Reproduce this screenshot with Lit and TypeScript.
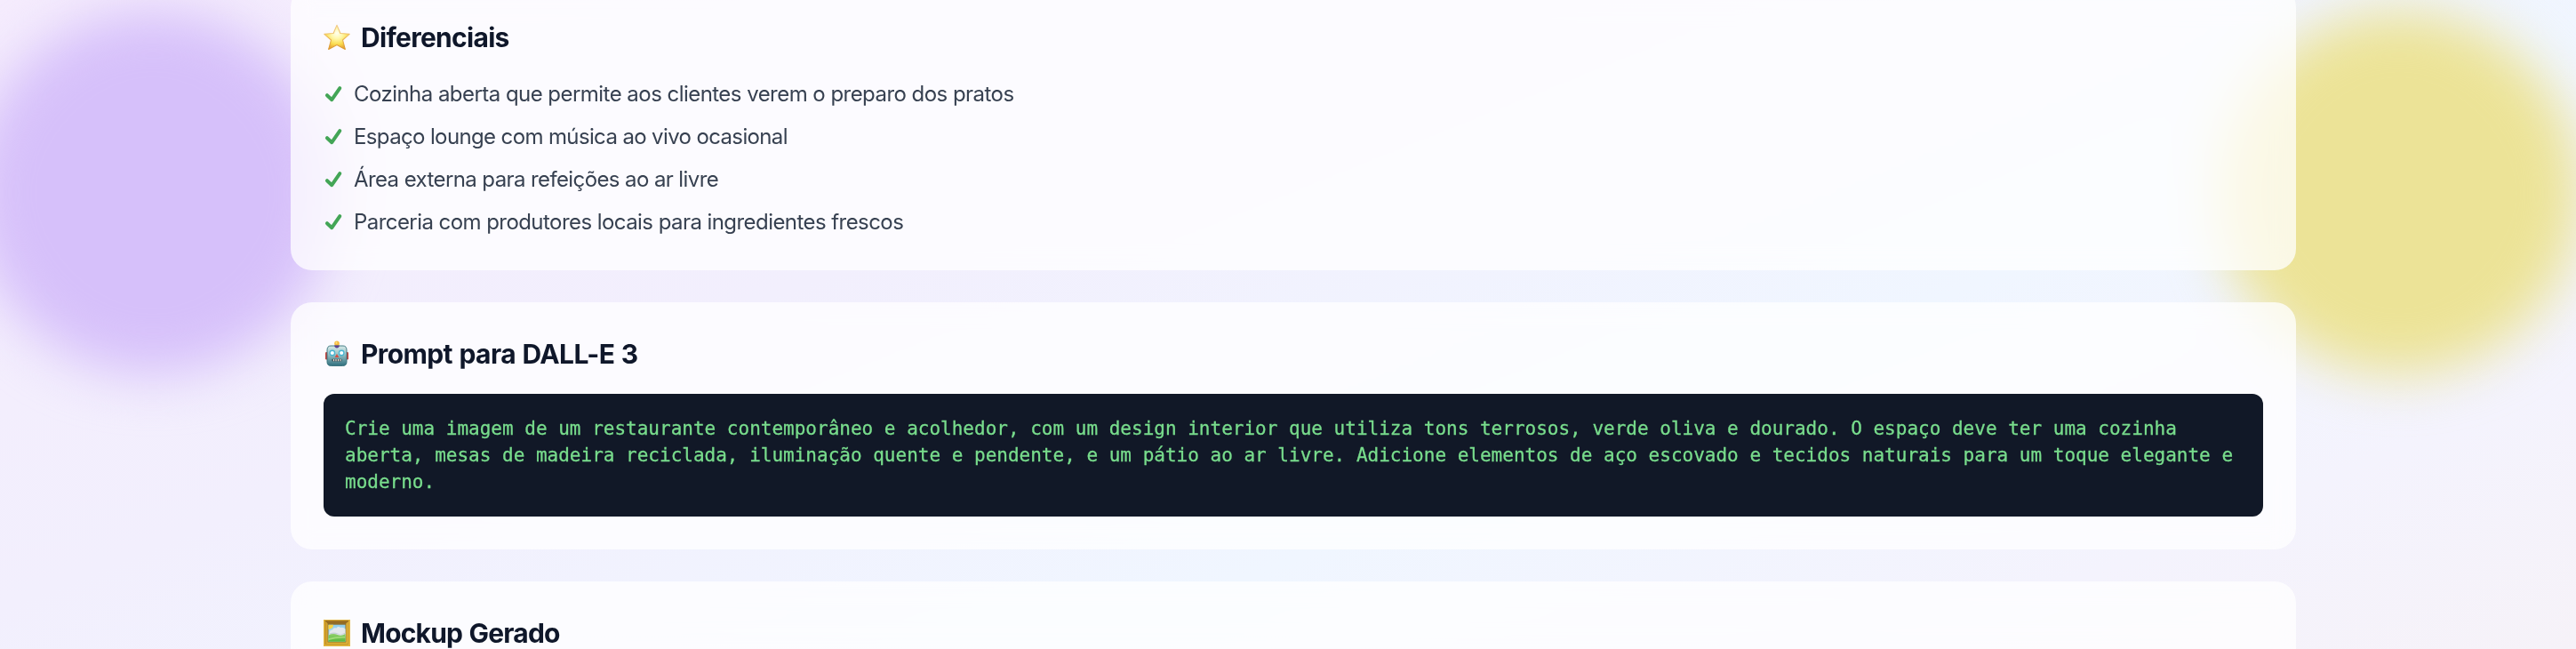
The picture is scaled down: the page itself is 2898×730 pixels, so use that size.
import { LitElement, html, css, svg } from "lit";
import { customElement } from "lit/decorators.js";

const differentials = [
  { text: "Cozinha aberta que permite aos clientes verem o preparo dos pratos", tracking: -0.54 },
  { text: "Espaço lounge com música ao vivo ocasional", tracking: -0.63 },
  { text: "Área externa para refeições ao ar livre", tracking: -0.6 },
  { text: "Parceria com produtores locais para ingredientes frescos", tracking: -0.56 },
];

const prompt =
  "Crie uma imagem de um restaurante contemporâneo e acolhedor, com um design interior que utiliza tons terrosos, verde oliva e dourado. O espaço deve ter uma cozinha aberta, mesas de madeira reciclada, iluminação quente e pendente, e um pátio ao ar livre. Adicione elementos de aço escovado e tecidos naturais para um toque elegante e moderno.";

const star = svg`
  <defs>
    <radialGradient id="sg" cx="50%" cy="34%" r="66%">
      <stop offset="0" stop-color="#fffff0"/><stop offset=".35" stop-color="#fff7a8"/>
      <stop offset=".7" stop-color="#fadb4d"/><stop offset="1" stop-color="#e5a030"/>
    </radialGradient>
    <linearGradient id="ss" x1="0" y1="0" x2="0" y2="1">
      <stop offset="0" stop-color="#f2cd8f"/><stop offset=".5" stop-color="#ecba5c"/><stop offset="1" stop-color="#db9731"/>
    </linearGradient>
  </defs>
  <path d="M15 1.2 L18.9 10.5 L29.2 11.3 L21.5 18 L24.3 28.4 L15 23.4 L5.7 28.4 L8.500 18 L.8 11.3 L11.100 10.5Z"
    fill="url(#sg)" stroke="url(#ss)" stroke-width="1.1" stroke-linejoin="round"/>`;

const robot = svg`
  <defs>
    <linearGradient id="rg" x1="0" y1="0" x2="0" y2="1">
      <stop offset="0" stop-color="#d6e9e8"/><stop offset=".4" stop-color="#9cc4c7"/><stop offset="1" stop-color="#2f6f7e"/>
    </linearGradient>
  </defs>
  <rect x="2" y="13" width="3.4" height="8.500" rx="1.2" fill="#c4423c"/>
  <rect x="24.6" y="13" width="3.4" height="8.500" rx="1.2" fill="#c4423c"/>
  <circle cx="15" cy="3.4" r="2.8" fill="#f4b93f"/><circle cx="14.5" cy="2.7" r="1.1" fill="#ffe27b"/>
  <path d="M8 6 h14 q4 0 4 5 v13 q0 4.500 -4.500 4.500 h-13 q-4.500 0 -4.500 -4.500 v-13 q0 -5 4 -5z" fill="url(#rg)" stroke="#37707b" stroke-width=".9"/>
  <path d="M12 5.600 h6 q-.4 2.800 -3 2.800 t-3 -2.800z" fill="#5d4190"/>
  <circle cx="9.800" cy="14" r="3.400" fill="#48b5d2"/><circle cx="9.800" cy="14" r="2.100" fill="#fff"/>
  <circle cx="20.200" cy="14" r="3.400" fill="#48b5d2"/><circle cx="20.200" cy="14" r="2.100" fill="#fff"/>
  <path d="M15 15 l2.300 4 h-4.600z" fill="#d84a3d"/>
  <rect x="9.500" y="20.800" width="11" height="2.800" rx=".8" fill="#354f59"/>
  <path d="M11.500 21v2.200M14 21v2.200M16.500 21v2.200M19 21v2.200" stroke="#efe2d3" stroke-width="1.200"/>`;

const picture = svg`
  <defs>
    <linearGradient id="pg" x1="0" y1="0" x2="0" y2="1">
      <stop offset="0" stop-color="#8fcdec"/><stop offset="1" stop-color="#dceef5"/>
    </linearGradient>
    <linearGradient id="gg" x1="0" y1="0" x2="0" y2="1">
      <stop offset="0" stop-color="#8fd069"/><stop offset="1" stop-color="#58b73d"/>
    </linearGradient>
  </defs>
  <rect x="0" y="0" width="30" height="30" rx=".6" fill="#dfb233"/>
  <path d="M1 1h28l-3.500 3.500h-21z" fill="#8c6420"/>
  <path d="M0 0l4.500 4.500v21L0 30z" fill="#d4a32f"/>
  <path d="M30 0l-4.500 4.500v21L30 30z" fill="#e3b53a"/>
  <path d="M.500 .500h29v29h-29z" fill="none" stroke="#e2b53f" stroke-width="1"/>
  <path d="M2.300 2.300h25.400v25.400h-25.400z" fill="none" stroke="#b98a2a" stroke-width=".7"/>
  <rect x="4.600" y="4.200" width="20.800" height="21.300" fill="#8a6a2b"/>
  <rect x="5.500" y="5.700" width="19" height="19" fill="url(#pg)"/>
  <path d="M5.500 5.700h5.500q.2 4.500 -5.500 5.200z" fill="#f8d443"/>
  <path d="M7 14q0 -3 3 -2.500 1 -3 4.500 -2 2 -2.500 4.500 -.5 3 -1 5.500 1.500v8H7z" fill="#e4e8ec"/>
  <path d="M7 15.500q5 -2 9 0t8.500 -1v2H7z" fill="#c5ced6"/>
  <path d="M5.500 17.500q5 -2.500 10 -.5t9 -1v8.700h-19z" fill="url(#gg)"/>
  <path d="M5.500 21q9 -2.500 19 -2v1.500q-10 -.5 -19 2.500z" fill="#a2dc78"/>`;

@customElement("app-root")
export class AppRoot extends LitElement {
  static styles = css`
    :host {
      display: block;
      position: relative;
      height: 730px;
      overflow: hidden;
      font-family: Inter, "Liberation Sans", sans-serif;
      background: linear-gradient(158deg, #f5ecfd 0%, #f2effd 36%, #f0f6ff 64%, #f4f3fd 84%, #f6f2f8 100%);
    }
    .blob {
      position: absolute;
      width: 408px;
      height: 408px;
      border-radius: 50%;
      filter: blur(30px);
    }
    .purple { left: -32px; top: 13px; background: #d6c0fa; }
    .yellow { left: 2495px; top: 13px; background: #ece397; }
    main {
      position: relative;
      width: 2256px;
      margin-left: 327px;
      margin-top: -16px;
      display: flex;
      flex-direction: column;
      gap: 36px;
    }
    section {
      padding: 37px;
      border-radius: 24px;
      background: rgba(255, 255, 255, 0.75);
      backdrop-filter: blur(12px);
    }
    h2 {
      margin: 0 0 24px;
      height: 42px;
      display: flex;
      align-items: center;
      gap: 12px;
      color: #0f172a;
      font-size: 30px;
      font-weight: 700;
      line-height: 42px;
      white-space: nowrap;
      word-spacing: 1px;
    }
    h2 svg { width: 30px; height: 30px; flex: none; overflow: visible; }
    ul {
      margin: 0;
      padding: 0;
      list-style: none;
      display: flex;
      flex-direction: column;
      gap: 12px;
    }
    li {
      height: 35px;
      padding-top: 1px;
      display: flex;
      align-items: center;
      gap: 11px;
      padding-left: 1px;
      color: #374151;
      font-size: 24px;
      line-height: 35px;
    }
    li svg { width: 22px; height: 22px; flex: none; }
    pre {
      margin: 0;
      padding: 24px;
      border-radius: 12px;
      background: #111827;
      color: #78dc8c;
      font: 21px/30px "DejaVu Sans Mono", monospace;
      -webkit-text-stroke: 0.3px #78dc8c;
      white-space: pre-wrap;
    }
  `;

  private heading(icon: unknown, text: string, tracking: number) {
    return html`<h2>
      <svg viewBox="0 0 30 30">${icon}</svg><span style="letter-spacing:${tracking}px">${text}</span>
    </h2>`;
  }

  render() {
    return html`
      <div class="blob purple"></div>
      <div class="blob yellow"></div>
      <main>
        <section>
          ${this.heading(star, "Diferenciais", -0.7)}
          <ul>
            ${differentials.map(
              (item) => html`<li>
                <svg viewBox="0 0 22 22"><path d="M3 12.200 L8.300 17.200 L17.300 4.200" fill="none" stroke="#43a556" stroke-width="4" stroke-linecap="round" stroke-linejoin="round"/></svg>
                <span style="letter-spacing:${item.tracking}px">${item.text}</span>
              </li>`
            )}
          </ul>
        </section>
        <section>
          ${this.heading(robot, "Prompt para DALL-E 3", -0.6)}
          <pre>${prompt}</pre>
        </section>
        <section>${this.heading(picture, "Mockup Gerado", -0.8)}</section>
      </main>
    `;
  }
}
